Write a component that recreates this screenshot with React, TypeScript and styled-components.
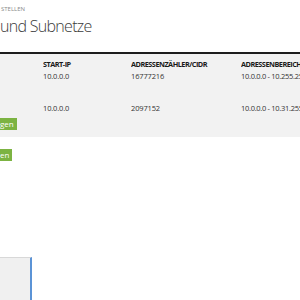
import React from "react"
import styled, { createGlobalStyle } from "styled-components"

const GlobalStyle = createGlobalStyle`
  html, body {
    margin: 0;
    padding: 0;
    background: #ffffff;
    overflow: hidden;
    font-family: "Open Sans", "Noto Sans", sans-serif;
  }
`

type Row = {
  startIp: string
  count: string
  range: string
}

const rows: Row[] = [
  { startIp: "10.0.0.0", count: "16777216", range: "10.0.0.0 - 10.255.255.255" },
  { startIp: "10.0.0.0", count: "2097152", range: "10.0.0.0 - 10.31.255.255" },
]

export default function App() {
  return (
    <>
      <GlobalStyle />
      <Page>
        <Header>
          <Breadcrumb>STELLEN</Breadcrumb>
          <Title>und Subnetze</Title>
        </Header>
        <Divider />
        <TableArea>
          <HeaderRow>
            <Cell />
            <HeadCell>Start-IP</HeadCell>
            <HeadCell>Adressenzähler/CIDR</HeadCell>
            <HeadCell>Adressenbereich</HeadCell>
          </HeaderRow>
          {rows.map((row, i) => (
            <DataRow key={i} $last={i === rows.length - 1}>
              <Cell />
              <Cell>{row.startIp}</Cell>
              <Cell>{row.count}</Cell>
              <RangeCell>{row.range}</RangeCell>
            </DataRow>
          ))}
          <GreenButton>gen</GreenButton>
        </TableArea>
        <Actions>
          <GreenButton>en</GreenButton>
        </Actions>
        <Panel />
      </Page>
    </>
  )
}

const Page = styled.div`
  width: 300px;
  height: 300px;
  overflow: hidden;
  display: flex;
  flex-direction: column;
`

const Header = styled.header`
  display: block;
  padding-top: 4px;
  height: 52px;
  box-sizing: border-box;
`

const Breadcrumb = styled.div`
  font-size: 6px;
  color: #8a8a8a;
  line-height: 10px;
  padding-left: 1px;
`

const Title = styled.h1`
  margin: 0;
  font-size: 16px;
  font-weight: 300;
  color: #3a3a3a;
  line-height: 24px;
  letter-spacing: -0.7px;
`

const Divider = styled.div`
  height: 2px;
  background: #1e1e1e;
`

const TableArea = styled.div`
  background: #f2f2f2;
  padding: 4px 0 0 0;
  display: flex;
  flex-direction: column;
  align-items: flex-start;
  height: 83px;
  box-sizing: border-box;
`

const gridCols = "43px 88px 110px 59px"

const HeaderRow = styled.div`
  display: grid;
  grid-template-columns: ${gridCols};
  height: 12px;
`

const DataRow = styled.div<{ $last: boolean }>`
  display: grid;
  grid-template-columns: ${gridCols};
  height: ${({ $last }) => ($last ? "16px" : "32px")};
`

const Cell = styled.div`
  font-size: 7.5px;
  color: #333;
  line-height: 12px;
  white-space: nowrap;
  letter-spacing: -0.15px;
  overflow: hidden;
`

const RangeCell = styled(Cell)`
  letter-spacing: -0.3px;
`

const HeadCell = styled(Cell)`
  font-size: 7.3px;
  font-weight: 700;
  text-transform: uppercase;
  color: #1a1a1a;
  letter-spacing: -0.5px;
`

const GreenButton = styled.button`
  border: none;
  background: #7cb342;
  color: #ffffff;
  font-family: "Open Sans", "Noto Sans", sans-serif;
  font-size: 8px;
  height: 12px;
  line-height: 12px;
  padding: 0 3px 0 0;
  margin: 0;
`

const Actions = styled.div`
  display: flex;
  padding-top: 12px;
  height: 120px;
  box-sizing: border-box;
  align-items: flex-start;
`

const Panel = styled.div`
  width: 30px;
  flex: 1;
  background: #f0f0f0;
  border-top: 1px solid #d8d8d8;
  border-right: 2px solid #5b93d6;
`
